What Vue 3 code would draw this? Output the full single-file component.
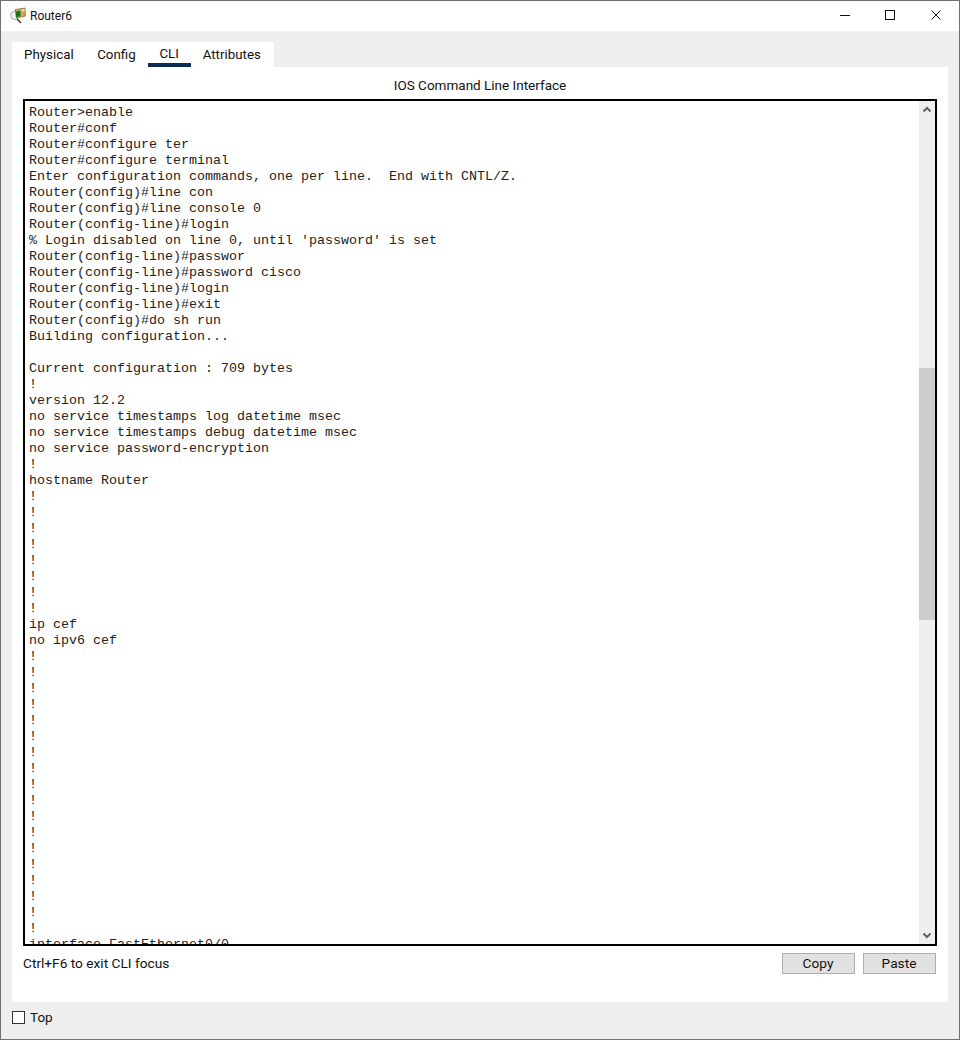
<script setup>
const lines = `Router>enable
Router#conf
Router#configure ter
Router#configure terminal
Enter configuration commands, one per line.  End with CNTL/Z.
Router(config)#line con
Router(config)#line console 0
Router(config-line)#login
% Login disabled on line 0, until 'password' is set
Router(config-line)#passwor
Router(config-line)#password cisco
Router(config-line)#login
Router(config-line)#exit
Router(config)#do sh run
Building configuration...

Current configuration : 709 bytes
!
version 12.2
no service timestamps log datetime msec
no service timestamps debug datetime msec
no service password-encryption
!
hostname Router
!
!
!
!
!
!
!
!
ip cef
no ipv6 cef
!
!
!
!
!
!
!
!
!
!
!
!
!
!
!
!
!
!
interface FastEthernet0/0`
const tabs = ['Physical', 'Config', 'CLI', 'Attributes']
</script>

<template>
  <div class="window">
    <header class="titlebar">
      <svg class="app-icon" width="18" height="18" viewBox="0 0 18 18">
        <circle cx="5.500" cy="8.500" r="4" fill="#f2f2f2" stroke="#a8a8a8" />
        <path d="M8 12l4 4" stroke="#333" stroke-width="1.400" />
        <path d="M6 2.500L16 1l.500 8-9 2z" fill="#c9a95a" stroke="#7d6432" stroke-width=".7" />
        <path d="M7 4.500l4.500-.7v5.500l-4.500.9z" fill="#17701c" />
        <path d="M12.500 2.500l3 -.4v1.800l-3 .4z" fill="#f3e3a8" />
      </svg>
      <span class="title">Router6</span>
      <div class="controls">
        <svg width="11" height="11" viewBox="0 0 11 11"><path d="M0 5.500h10" stroke="#111" /></svg>
        <svg width="11" height="11" viewBox="0 0 11 11"><rect x=".5" y=".5" width="9" height="9" fill="none" stroke="#111" /></svg>
        <svg width="11" height="11" viewBox="0 0 11 11"><path d="M.5 .5l9 9M9.500 .5l-9 9" stroke="#111" fill="none" /></svg>
      </div>
    </header>
    <main class="body">
      <nav class="tabs">
        <button v-for="t in tabs" :key="t" class="tab" :class="{ active: t === 'CLI' }">{{ t }}</button>
      </nav>
      <section class="panel">
        <h1 class="heading">IOS Command Line Interface</h1>
        <div class="terminal">
          <pre class="output">{{ lines }}</pre>
          <div class="scrollbar">
            <svg class="arrow" width="16" height="17" viewBox="0 0 16 17"><path d="M4.500 10.500L8 7l3.500 3.500" fill="none" stroke="#606060" stroke-width="2" /></svg>
            <div class="track"><div class="thumb"></div></div>
            <svg class="arrow" width="16" height="17" viewBox="0 0 16 17"><path d="M4.500 6.500L8 10l3.500-3.500" fill="none" stroke="#606060" stroke-width="2" /></svg>
          </div>
        </div>
        <div class="actions">
          <span class="hint">Ctrl+F6 to exit CLI focus</span>
          <div class="buttons">
            <button class="btn">Copy</button>
            <button class="btn">Paste</button>
          </div>
        </div>
      </section>
      <label class="top"><span class="check"></span><span class="top-label">Top</span></label>
    </main>
  </div>
</template>

<style>
html, body { margin: 0; background: #efefef; }
</style>

<style scoped>
.window {
  box-sizing: border-box;
  width: 960px;
  height: 1040px;
  border: 1px solid #707070;
  display: flex;
  flex-direction: column;
  font-family: Roboto, "Liberation Sans", sans-serif;
  font-size: 13.5px;
  color: #111;
  background: #efefef;
}
.titlebar {
  height: 30px;
  flex: none;
  background: #fff;
  display: flex;
  align-items: center;
  padding-left: 8px;
  font-size: 12px;
}
.app-icon { margin-right: 3px; }
.controls {
  margin-left: auto;
  margin-top: -1px;
  display: flex;
  gap: 34px;
  padding-right: 17px;
}
.controls svg + svg + svg { margin-left: 1px; }
.body {
  flex: 1;
  display: flex;
  flex-direction: column;
  padding: 11px 11px 0;
}
.tabs {
  display: flex;
  height: 25px;
  background: #fff;
  align-self: flex-start;
  padding: 0 13px 0 0;
  font-size: 13.33px;
}
.tab {
  border: 0;
  background: none;
  font: inherit;
  color: inherit;
  padding: 0;
  margin-left: 12px;
  height: 25px;
  box-sizing: border-box;
}
.tab:nth-child(2) { margin-left: 23.500px; }
.tab.active { width: 43px; border-bottom: 4px solid #0e2d52; padding: 2px 0 0; }
.panel {
  background: #fff;
  height: 935px;
  padding: 0 11px;
  display: flex;
  flex-direction: column;
}
.heading {
  margin: 0;
  height: 32px;
  font: inherit;
  font-size: 13.5px;
  padding-top: 10px;
  box-sizing: border-box;
  text-align: center;
}
.terminal {
  box-sizing: border-box;
  height: 847px;
  border: 2px solid #000;
  display: flex;
  overflow: hidden;
}
.output {
  flex: 1;
  margin: 0;
  padding: 4px 0 0 4px;
  font-family: "Liberation Mono", monospace;
  font-size: 13.33px;
  line-height: 16px;
  color: #222;
  overflow: hidden;
}
.scrollbar {
  width: 16px;
  background: #efefef;
  display: flex;
  flex-direction: column;
}
.arrow { flex: none; }
.track { flex: 1; padding-top: 250px; }
.thumb { height: 252px; background: #cdcdcd; }
.actions {
  display: flex;
  justify-content: space-between;
  align-items: center;
  margin-top: 7px;
  margin-right: 1px;
  height: 21px;
}
.hint { font-size: 13.7px; padding-bottom: 2px; }
.buttons { display: flex; gap: 8px; }
.btn {
  box-sizing: border-box;
  width: 73px;
  height: 21px;
  padding: 0 1px 2px 0;
  background: #e1e1e1;
  border: 1px solid #adadad;
  font: inherit;
  font-size: 13.7px;
  color: inherit;
}
.top {
  display: flex;
  align-items: center;
  height: 13px;
  margin-top: 9px;
}
.top-label { padding-bottom: 2px; }
.check {
  box-sizing: border-box;
  width: 13px;
  height: 13px;
  border: 1px solid #333;
  background: #fff;
  margin-right: 5px;
}
</style>
